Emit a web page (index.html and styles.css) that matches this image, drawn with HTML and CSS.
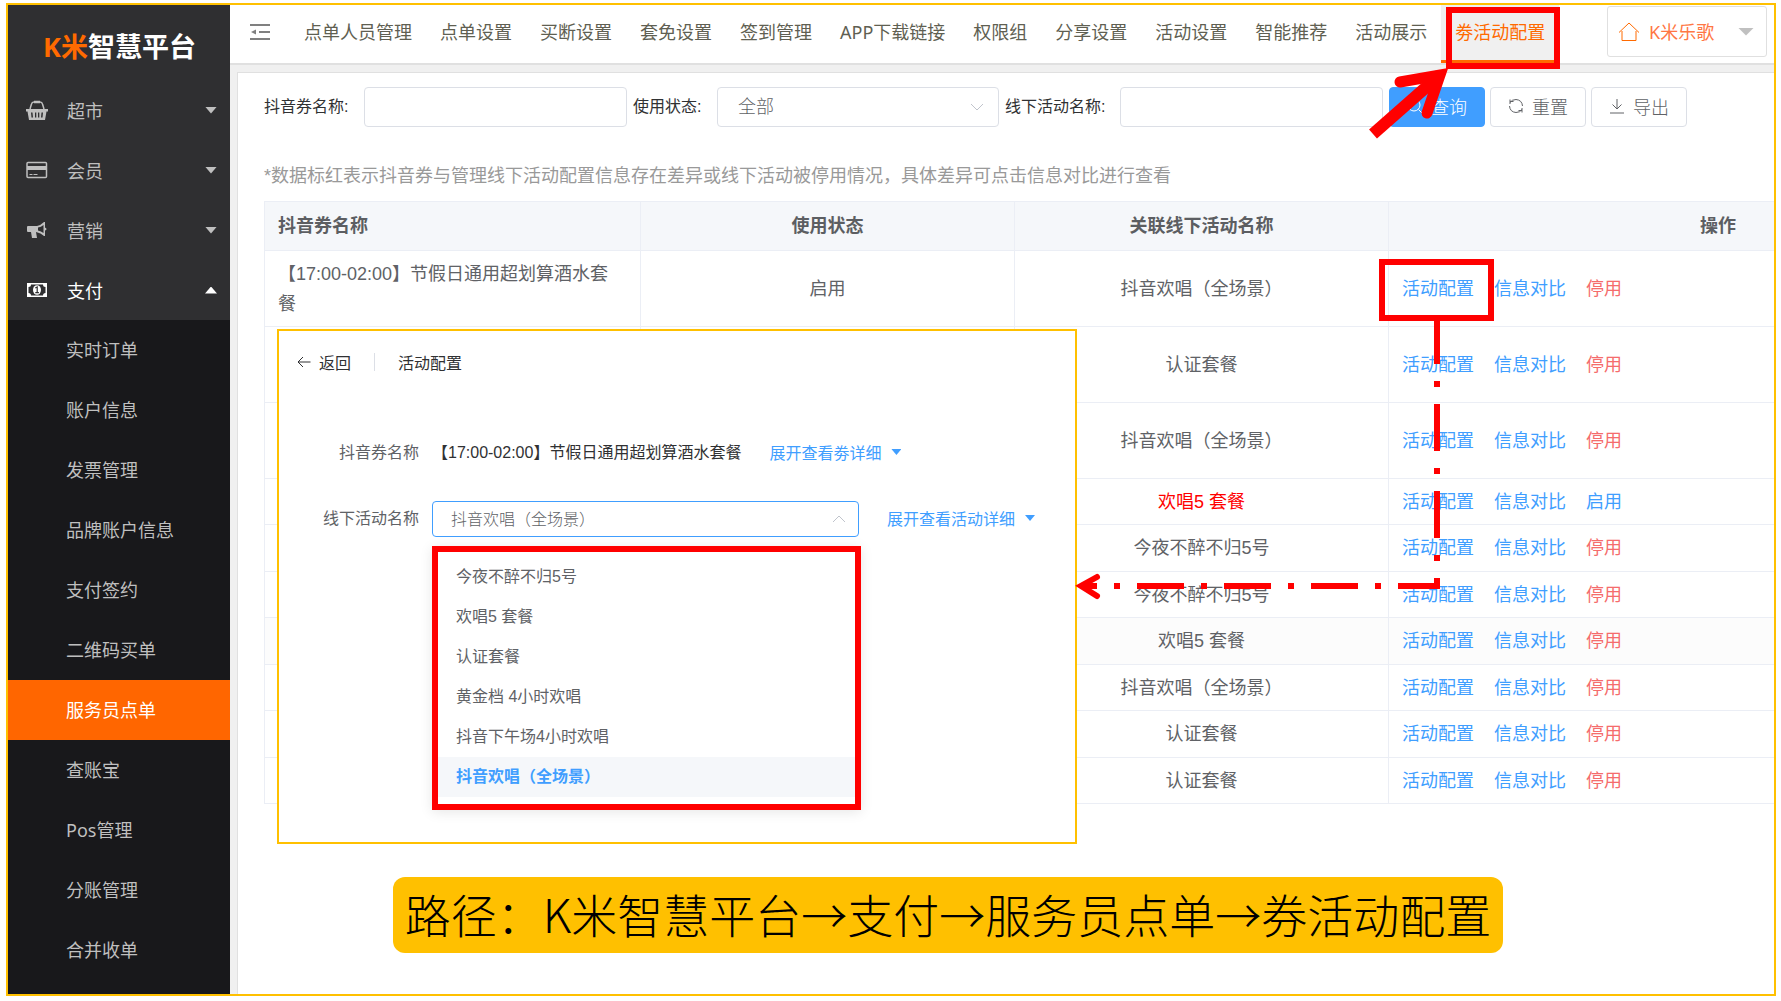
FILE: index.html
```html
<!DOCTYPE html>
<html lang="zh-CN">
<head>
<meta charset="utf-8">
<title>K米智慧平台 - 券活动配置</title>
<link rel="stylesheet" href="styles.css">
</head>
<body>
<div class="frame">
  <aside class="sidebar">
    <div class="logo"><span class="logo-mark">K米</span>智慧平台</div>
    <nav class="menu">
      <a class="menu-item" href="#">
        <svg class="menu-icon" viewBox="0 0 22 20" fill="none" stroke="currentColor"><path d="M4 9 5.500 4Q6 2 8 2h6q2 0 2.500 2L18 9" stroke-width="1.500"/><path d="M8 2h6" stroke-width="2.500"/><path fill="currentColor" fill-rule="evenodd" stroke="none" d="M0 9h22v2.500h-1.500L19 20H3L1.500 11.500H0zM5 12.500l.5 5H7l-.5-5zM9 12.500v5h1.300v-5zM12 12.500v5h1.300v-5zM15.500 12.500l-.5 5h1.500l.5-5z"/></svg>
        <span>超市</span><i class="caret"></i></a>
      <a class="menu-item" href="#">
        <svg class="menu-icon" viewBox="0 0 22 20" fill="none" stroke="currentColor" stroke-width="1.500"><rect x="1" y="2.500" width="19.500" height="15" rx="1"/><path d="M1 8h19.500" stroke-width="4"/><path d="M3.500 14.500h3M7.500 14.500h4" stroke-width="1"/></svg>
        <span>会员</span><i class="caret"></i></a>
      <a class="menu-item" href="#">
        <svg class="menu-icon" viewBox="0 0 22 20" fill="currentColor"><path fill-rule="evenodd" d="M2 6h9q4-1 7-4h1v5.500q1.500.5 1.500 1.500T19 10.500V16h-1q-3-3-8-4l1 6H6L5 12H2Q1 12 1 11V7q0-1 1-1zM12 7.500v3q3 .5 5.500 2.500V5Q15 7 12 7.500z"/></svg>
        <span>营销</span><i class="caret"></i></a>
      <a class="menu-item open" href="#">
        <svg class="menu-icon" viewBox="0 0 22 20" fill="currentColor"><path fill-rule="evenodd" d="M1 3h20v14H1zM5 4.500Q5 7 2.500 7v6Q5 13 5 15.500h12q0-2.500 2.500-2.500V7Q17 7 17 4.500z"/><ellipse cx="11" cy="10" rx="4" ry="4.800"/><path d="M9.300 8 11.200 7v5.500M9.300 12.700h3.600" fill="none" stroke="#2f2f31" stroke-width="1.200"/></svg>
        <span>支付</span><i class="caret up"></i></a>
    </nav>
    <nav class="submenu">
      <a href="#">实时订单</a>
      <a href="#">账户信息</a>
      <a href="#">发票管理</a>
      <a href="#">品牌账户信息</a>
      <a href="#">支付签约</a>
      <a href="#">二维码买单</a>
      <a class="active" href="#">服务员点单</a>
      <a href="#">查账宝</a>
      <a href="#">Pos管理</a>
      <a href="#">分账管理</a>
      <a href="#">合并收单</a>
    </nav>
  </aside>

  <div class="main">
    <header class="topbar">
      <button class="collapse" type="button" aria-label="收起菜单">
        <svg viewBox="0 0 20 18" width="20" height="18" stroke="#808080" stroke-width="2" fill="#808080"><path d="M0 2h20M9 9h11M0 16h20"/><path d="M1 9 6 6.500v5z" stroke="none"/></svg>
      </button>
      <nav class="tabs">
        <a href="#">点单人员管理</a><a href="#">点单设置</a><a href="#">买断设置</a><a href="#">套免设置</a><a href="#">签到管理</a><a href="#">APP下载链接</a><a href="#">权限组</a><a href="#">分享设置</a><a href="#">活动设置</a><a href="#">智能推荐</a><a href="#">活动展示</a><a class="active" href="#">劵活动配置</a>
      </nav>
      <div class="store">
        <svg viewBox="0 0 22 20" width="22" height="20" fill="none" stroke="#ff6a00" stroke-width="1"><path d="M1 10.500 11 1l10 9.500M4 9v9.500h14V9"/></svg>
        <select aria-label="门店"><option>K米乐歌</option></select>
        <i class="caret"></i>
      </div>
    </header>

    <main class="panel">
      <form class="filters">
        <label class="label-a" for="coupon">抖音券名称:</label>
        <input id="coupon" type="text">
        <label class="label-b" for="status">使用状态:</label>
        <div class="select-box">
          <select id="status"><option>全部</option></select>
          <svg class="chevron" viewBox="0 0 14 8" width="14" height="8"><path d="M1 1l6 6 6-6"/></svg>
        </div>
        <label class="label-c" for="offline">线下活动名称:</label>
        <input id="offline" type="text">
        <div class="actions">
          <button class="btn primary" type="button"><svg viewBox="0 0 16 16" width="16" height="16"><circle cx="7" cy="7" r="6"/><path d="M11.500 11.500 15 15"/></svg>查询</button>
          <button class="btn" type="button"><svg viewBox="0 0 16 16" width="16" height="16"><path d="M2 6V1.500M2 3.500h3.500M2 4.500Q4 1.500 8 1.500 14 2 14.500 8M14 10v4.500M14 12.500h-3.500M14 11.500Q12 14.500 8 14.500 2 14 1.500 8"/></svg>重置</button>
          <button class="btn" type="button"><svg viewBox="0 0 16 16" width="16" height="16"><path d="M8 1v10M3.500 6.500 8 11l4.500-4.500M1 15h14"/></svg>导出</button>
        </div>
      </form>
      <p class="hint">*数据标红表示抖音券与管理线下活动配置信息存在差异或线下活动被停用情况，具体差异可点击信息对比进行查看</p>
      <div class="table-wrap">
        <table>
          <colgroup><col class="c1"><col class="c2"><col class="c2"><col class="c3"></colgroup>
          <thead><tr><th class="left">抖音券名称</th><th>使用状态</th><th>关联线下活动名称</th><th>操作</th></tr></thead>
          <tbody>
            <tr class="tall"><td class="left">【17:00-02:00】节假日通用超划算酒水套餐</td><td>启用</td><td>抖音欢唱（全场景）</td><td class="ops"><a href="#">活动配置</a><a href="#">信息对比</a><a class="stop" href="#">停用</a></td></tr>
            <tr class="tall"><td></td><td></td><td>认证套餐</td><td class="ops"><a href="#">活动配置</a><a href="#">信息对比</a><a class="stop" href="#">停用</a></td></tr>
            <tr class="tall"><td></td><td></td><td>抖音欢唱（全场景）</td><td class="ops"><a href="#">活动配置</a><a href="#">信息对比</a><a class="stop" href="#">停用</a></td></tr>
            <tr><td></td><td></td><td class="warn">欢唱5 套餐</td><td class="ops"><a href="#">活动配置</a><a href="#">信息对比</a><a href="#">启用</a></td></tr>
            <tr><td></td><td></td><td>今夜不醉不归5号</td><td class="ops"><a href="#">活动配置</a><a href="#">信息对比</a><a class="stop" href="#">停用</a></td></tr>
            <tr><td></td><td></td><td>今夜不醉不归5号</td><td class="ops"><a href="#">活动配置</a><a href="#">信息对比</a><a class="stop" href="#">停用</a></td></tr>
            <tr class="hover"><td></td><td></td><td>欢唱5 套餐</td><td class="ops"><a href="#">活动配置</a><a href="#">信息对比</a><a class="stop" href="#">停用</a></td></tr>
            <tr><td></td><td></td><td>抖音欢唱（全场景）</td><td class="ops"><a href="#">活动配置</a><a href="#">信息对比</a><a class="stop" href="#">停用</a></td></tr>
            <tr><td></td><td></td><td>认证套餐</td><td class="ops"><a href="#">活动配置</a><a href="#">信息对比</a><a class="stop" href="#">停用</a></td></tr>
            <tr><td></td><td></td><td>认证套餐</td><td class="ops"><a href="#">活动配置</a><a href="#">信息对比</a><a class="stop" href="#">停用</a></td></tr>
          </tbody>
        </table>
      </div>
    </main>
  </div>
</div>

<section class="dialog">
  <div class="dialog-head">
    <button type="button" class="back"><svg viewBox="0 0 14 12" width="14" height="12"><path d="M13.500 6H1M6 1 1 6l5 5"/></svg>返回</button>
    <h2>活动配置</h2>
  </div>
  <div class="form-row">
    <span class="form-label">抖音券名称</span>
    <span class="form-value">【17:00-02:00】节假日通用超划算酒水套餐</span>
    <a class="expand" href="#">展开查看劵详细<i class="caret"></i></a>
  </div>
  <div class="form-row">
    <label class="form-label" for="activity">线下活动名称</label>
    <div class="combo">
      <select id="activity"><option>抖音欢唱（全场景）</option></select>
      <svg class="chevron" viewBox="0 0 14 8" width="14" height="8"><path d="M1 7l6-6 6 6"/></svg>
      <ul class="options" role="listbox" aria-label="线下活动名称">
        <li role="option">今夜不醉不归5号</li>
        <li role="option">欢唱5 套餐</li>
        <li role="option">认证套餐</li>
        <li role="option">黄金档 4小时欢唱</li>
        <li role="option">抖音下午场4小时欢唱</li>
        <li role="option" aria-selected="true" class="selected">抖音欢唱（全场景）</li>
      </ul>
    </div>
    <a class="expand" href="#">展开查看活动详细<i class="caret"></i></a>
  </div>
</section>

<div class="path-note">路径：K米智慧平台→支付→服务员点单→券活动配置</div>

<svg class="marks" width="1781" height="1001" viewBox="0 0 1781 1001" fill="none" stroke="#f00" stroke-width="6">
  <rect x="1449" y="10" width="108" height="56"/>
  <rect x="1382" y="262" width="109" height="56"/>
  <path d="M1373 134 1440 75" stroke-width="12"/>
  <path d="M1400 82 1440 75 1427 113" stroke-width="11" stroke-linecap="round" stroke-miterlimit="8"/>
  <path d="M1437 317V586H1082" stroke-dasharray="47 17 6 17"/>
  <path d="M1097 577 1081 586 1097 596" stroke-linecap="round" stroke-miterlimit="8"/>
</svg>
</body>
</html>
```

FILE: styles.css
```css
* { box-sizing: border-box; }

body {
  position: relative;
  margin: 0;
  padding: 3px 5px 5px 6px;
  background: #fff;
  color: #606266;
  font-family: "Liberation Sans", "Noto Sans CJK SC", sans-serif;
  font-size: 18px;
}

a { color: inherit; text-decoration: none; }
button, input, select { font: inherit; color: inherit; }
select { appearance: none; }

.frame {
  display: flex;
  min-height: calc(100vh - 8px);
  border: 2px solid #ffc000;
}

.caret {
  width: 12px;
  height: 7px;
  background: currentColor;
  clip-path: polygon(0 0, 100% 0, 50% 100%);
}
.caret.up { clip-path: polygon(50% 0, 100% 100%, 0 100%); }

/* Sidebar */
.sidebar {
  flex: none;
  width: 222px;
  background: #18181b;
  color: #bfbfbf;
  font-family: "Noto Sans", "Noto Sans CJK SC", sans-serif;
}
.logo {
  height: 75px;
  padding: 22px 0 0 35px;
  background: #2f2f31;
  color: #fff;
  font-size: 27px;
  font-weight: 700;
  line-height: 40px;
}
.logo-mark { color: #ff6a00; }
.menu { background: #2f2f31; }
.menu-item {
  display: flex;
  align-items: center;
  height: 60px;
  padding: 0 13px 0 18px;
}
.menu-icon { width: 22px; height: 20px; margin-right: 19px; }
.menu-item .caret { margin-left: auto; }
.menu-item.open { color: #fff; }
.submenu a {
  display: block;
  height: 60px;
  padding-left: 58px;
  line-height: 60px;
}
.submenu .active { background: #f60; color: #fff; }

/* Top bar */
.main {
  flex: 1;
  min-width: 0;
  display: flex;
  flex-direction: column;
  background: #f0f0f0;
}
.topbar {
  display: flex;
  height: 60px;
  padding: 0 7px 0 20px;
  border-bottom: 2px solid #e0e0e0;
  background: #fff;
  color: #5f5f52;
  font-family: "Noto Sans", "Noto Sans CJK SC", sans-serif;
}
.collapse {
  display: flex;
  align-items: center;
  width: 40px;
  padding: 0 0 4px;
  border: 0;
  background: none;
}
.tabs { display: flex; white-space: nowrap; }
.tabs a { padding: 0 14px; line-height: 55px; border-bottom: 3px solid transparent; }
.tabs .active { background: #f0f0f0; border-color: #ff6a00; color: #ff6a00; }
.store {
  display: flex;
  align-items: center;
  width: 160px;
  height: 51px;
  margin: 1px 0 0 auto;
  padding: 0 12px 0 10px;
  border: 1px solid #e0e0e0;
  border-radius: 3px;
  color: #ff7744;
}
.store select { flex: 1; min-width: 0; padding: 0 0 0 9px; border: 0; background: none; }
.store .caret { width: 16px; height: 8px; color: #c0c0c0; }

/* Content panel */
.panel {
  flex: 1;
  margin: 7px 0 0 7px;
  padding: 14px 0 0 26px;
  border: 1px solid #e0e0e0;
  border-width: 1px 0 0 1px;
  background: #fff;
}
.filters { display: flex; align-items: center; }
.filters label { flex: none; font-size: 16px; color: #303133; padding-bottom: 4px; }
.label-a { width: 100px; }
.label-b { width: 90px; padding-left: 6px; }
.label-c { width: 121px; padding-left: 6px; }
.filters input, .select-box select {
  width: 263px;
  height: 40px;
  padding: 0 20px;
  border: 1px solid #dcdfe6;
  border-radius: 4px;
  background: #fff;
}
.select-box, .combo { position: relative; }
.select-box select { width: 282px; font-weight: 300; }
.chevron {
  position: absolute;
  right: 15px;
  top: 16px;
  fill: none;
  stroke: #c0c4cc;
}
.actions { display: flex; gap: 5px; margin-left: 6px; }
.btn {
  display: flex;
  align-items: center;
  justify-content: center;
  gap: 8px;
  width: 96px;
  height: 40px;
  padding: 0 0 2px;
  border: 1px solid #dcdfe6;
  border-radius: 4px;
  background: #fff;
  font-weight: 300;
}
.btn svg, .back svg { fill: none; stroke: currentColor; stroke-width: 1; }
.btn.primary { background: #409eff; border-color: #409eff; color: #fff; }
.hint { margin: 34px 0 10px; line-height: 30px; color: #999; }

/* Table */
.table-wrap { overflow: hidden; }
table {
  width: 1784px;
  table-layout: fixed;
  border-collapse: separate;
  border-spacing: 0;
  border: 1px solid #ebeef5;
  border-width: 1px 0 0 1px;
}
.c1 { width: 376px; }
.c2 { width: 374px; }
th, td {
  height: 46px;
  padding: 0 13px;
  border: 1px solid #ebeef5;
  border-width: 0 1px 1px 0;
  line-height: 30px;
  text-align: center;
}
th { height: 49px; background: #f5f7fa; color: #5c5e62; }
tr:nth-child(odd) td { height: 47px; }
tr.tall td { height: 76px; }
.left { padding-right: 20px; text-align: left; }
.hover { background: #fcfcfc; }
.warn { color: #f00; }
.ops { text-align: left; color: #409eff; }
.ops a { margin-right: 20px; }
.stop { color: #f56c6c; }

/* Activity dialog */
.dialog {
  position: absolute;
  left: 277px;
  top: 329px;
  width: 800px;
  height: 515px;
  padding: 16px;
  border: 2px solid #ffc000;
  background: #fff;
  font-size: 16px;
}
.dialog-head { display: flex; align-items: center; height: 30px; margin-bottom: 58px; color: #303133; }
.back {
  display: flex;
  align-items: center;
  gap: 8px;
  height: 18px;
  padding: 0 23px 0 2px;
  border: 0;
  border-right: 1px solid #dcdfe6;
  background: none;
}
h2 { margin: 0 0 0 23px; font-size: 16px; font-weight: 400; }
.form-row { display: flex; align-items: center; height: 36px; margin-bottom: 30px; }
.form-label { width: 124px; margin-right: 13px; padding-bottom: 4px; text-align: right; }
.form-value { padding-bottom: 4px; color: #303133; }
.expand {
  display: flex;
  align-items: center;
  gap: 10px;
  margin-left: 28px;
  padding-bottom: 2px;
  color: #409eff;
}
.expand .caret { width: 10px; height: 6px; }
.combo select {
  width: 427px;
  height: 36px;
  padding: 0 18px;
  border: 1px solid #409eff;
  border-radius: 4px;
  background: #fff;
  font-weight: 300;
}
.combo .chevron { top: 14px; right: 13px; }
.options {
  position: absolute;
  left: 0;
  top: 45px;
  width: 429px;
  margin: 0;
  padding: 5px 0 7px;
  border: 6px solid #f00;
  background: #fff;
  box-shadow: 0 2px 12px rgba(0, 0, 0, 0.1);
  list-style: none;
}
.options li { padding-left: 18px; line-height: 40px; }
.options .selected { background: #f5f7fa; color: #409eff; font-weight: 700; }

/* Annotations above the page */
.path-note {
  position: absolute;
  left: 393px;
  top: 877px;
  width: 1110px;
  padding-bottom: 4px;
  border-radius: 12px;
  background: #ffc000;
  color: #000;
  font-family: "Noto Sans CJK SC", sans-serif;
  font-size: 46px;
  font-weight: 300;
  line-height: 72px;
  text-align: center;
  white-space: nowrap;
}
.marks { position: absolute; left: 0; top: 0; pointer-events: none; }
```
